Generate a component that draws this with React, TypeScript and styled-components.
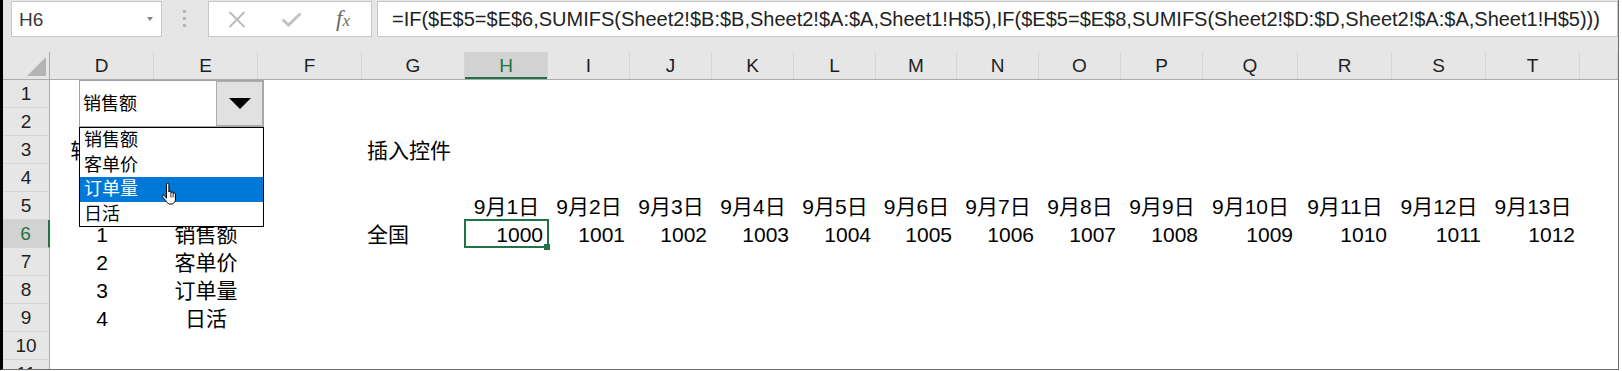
import React from "react";
import styled, { createGlobalStyle, css } from "styled-components";

const FONT = `"Liberation Sans", "Noto Sans CJK SC", sans-serif`;

const GlobalStyle = createGlobalStyle`
  html, body { margin: 0; padding: 0; background: #ffffff; }
  body { font-family: ${FONT}; }
  * { box-sizing: border-box; }
`;

const COLS = [47, 104, 104, 104, 103, 83, 82, 82, 82, 82, 81, 82, 82, 82, 95, 94, 94, 94];
const GRID = COLS.map((w) => `${w}px`).join(" ") + " 1fr";
const LETTERS = ["D", "E", "F", "G", "H", "I", "J", "K", "L", "M", "N", "O", "P", "Q", "R", "S", "T", ""];

const Window = styled.div`
  width: 1622px;
  height: 371px;
  background: #ffffff;
  overflow: hidden;
`;

const Frame = styled.div`
  width: 1619px;
  height: 370px;
  background: #e6e6e6;
  border-left: 3px solid #000000;
  border-right: 1px solid #6f6f6f;
  border-bottom: 1px solid #6f6f6f;
  display: flex;
  flex-direction: column;
  overflow: hidden;
`;

const FormulaBar = styled.div`
  height: 52px;
  flex: none;
  display: flex;
  align-items: flex-start;
  padding-top: 1px;
`;

const NameBox = styled.div`
  margin-left: 8px;
  width: 151px;
  height: 36px;
  background: #ffffff;
  border: 1px solid #c6c6c6;
  display: flex;
  align-items: center;
  justify-content: space-between;
  padding: 0 8px 0 7px;
  font-size: 19px;
  color: #3a3a3a;
  line-height: 1;
`;

const SmallCaret = styled.span`
  width: 0;
  height: 0;
  border-left: 3.5px solid transparent;
  border-right: 3.5px solid transparent;
  border-top: 4px solid #808080;
`;

const Grip = styled.div`
  margin-left: 21px;
  margin-top: 9px;
  display: flex;
  flex-direction: column;
  gap: 4px;
`;

const GripDot = styled.span`
  width: 3px;
  height: 3px;
  background: #b4b4b4;
`;

const FxBox = styled.div`
  margin-left: 22px;
  width: 164px;
  height: 36px;
  background: #ffffff;
  border: 1px solid #c6c6c6;
  display: grid;
  grid-template-columns: 55px 54px 50px;
  align-items: center;
  justify-items: center;
`;

const FxLabel = styled.span`
  font-family: "Liberation Serif", serif;
  font-style: italic;
  color: #6a6a6a;
  font-size: 23px;
  line-height: 1;
  margin-top: -2px;
  & > small {
    font-size: 17px;
  }
`;

const FormulaInput = styled.div`
  margin-left: 5px;
  flex: 1;
  height: 36px;
  background: #ffffff;
  border: 1px solid #c6c6c6;
  display: flex;
  align-items: center;
  padding-left: 14px;
  font-size: 20px;
  color: #222222;
  white-space: nowrap;
  overflow: hidden;
  line-height: 1;
`;

const HeaderRow = styled.div`
  height: 28px;
  flex: none;
  display: grid;
  grid-template-columns: ${GRID};
  border-bottom: 1px solid #ababab;
`;

const Corner = styled.div`
  border-right: 1px solid #ababab;
  display: flex;
  align-items: flex-end;
  justify-content: flex-end;
  padding: 0 3px 3px 0;
`;

const ColHeader = styled.div<{ $active?: boolean }>`
  border-right: 1px solid #d5d5d5;
  display: flex;
  align-items: center;
  justify-content: center;
  font-size: 19px;
  color: #1f1f1f;
  line-height: 1;
  ${(p) =>
    p.$active &&
    css`
      background: #d2d2d2;
      color: #217346;
      box-shadow: inset 0 -2px 0 #217346;
    `}
`;

const Body = styled.div`
  position: relative;
  flex: 1;
  display: grid;
  grid-template-columns: ${GRID};
  grid-auto-rows: 28px;
  background: #ffffff;
  overflow: hidden;
`;

const RowHeader = styled.div<{ $active?: boolean }>`
  background: #e6e6e6;
  border-right: 1px solid #ababab;
  border-bottom: 1px solid #d5d5d5;
  display: flex;
  align-items: center;
  justify-content: center;
  font-size: 19px;
  color: #1f1f1f;
  line-height: 1;
  ${(p) =>
    p.$active &&
    css`
      background: #d2d2d2;
      color: #217346;
      border-right: 2px solid #217346;
    `}
`;

const Cell = styled.div<{ $align?: "left" | "center" | "right"; $selected?: boolean }>`
  position: relative;
  display: flex;
  align-items: center;
  justify-content: ${(p) =>
    p.$align === "right" ? "flex-end" : p.$align === "center" ? "center" : "flex-start"};
  padding: 0 5px;
  font-size: 21px;
  line-height: 1;
  color: #000000;
  white-space: nowrap;
  ${(p) =>
    p.$selected &&
    css`
      &::after {
        content: "";
        position: absolute;
        left: -1px;
        top: -1px;
        right: -1px;
        bottom: 0;
        border: 2px solid #217346;
      }
      &::before {
        content: "";
        position: absolute;
        right: -2px;
        bottom: -2px;
        width: 6px;
        height: 6px;
        background: #217346;
        z-index: 1;
      }
    `}
`;

const Combo = styled.div`
  position: absolute;
  left: 76px;
  top: 0;
  width: 185px;
  height: 47px;
  background: #ffffff;
  border: 1px solid #a6a6a6;
  display: flex;
  z-index: 3;
`;

const ComboText = styled.div`
  flex: 1;
  display: flex;
  align-items: center;
  padding-left: 3px;
  font-size: 18px;
  color: #000000;
  line-height: 1;
`;

const ComboButton = styled.div`
  width: 47px;
  background: #e1e1e1;
  border: 1px solid #adadad;
  display: flex;
  align-items: center;
  justify-content: center;
`;

const ComboArrow = styled.span`
  width: 0;
  height: 0;
  border-left: 11px solid transparent;
  border-right: 11px solid transparent;
  border-top: 11px solid #000000;
`;

const List = styled.div`
  position: absolute;
  left: 76px;
  top: 47px;
  width: 185px;
  background: #ffffff;
  border: 1px solid #000000;
  display: flex;
  flex-direction: column;
  z-index: 3;
`;

const ListItem = styled.div<{ $active?: boolean }>`
  position: relative;
  height: 24.5px;
  display: flex;
  align-items: center;
  padding-left: 4px;
  font-size: 18px;
  line-height: 1;
  color: ${(p) => (p.$active ? "#ffffff" : "#000000")};
  background: ${(p) => (p.$active ? "#0078d7" : "transparent")};
`;

const Pointer = styled.svg`
  position: absolute;
  left: 81px;
  top: 6px;
  z-index: 4;
`;

type CellDef = { text: string; align: "left" | "center" | "right" };

const dates = Array.from({ length: 13 }, (_, i) => `9月${i + 1}日`);
const values = Array.from({ length: 13 }, (_, i) => String(1000 + i));
const labels = ["销售额", "客单价", "订单量", "日活"];

function buildRows(): Record<number, Record<number, CellDef>> {
  const rows: Record<number, Record<number, CellDef>> = {};
  for (let r = 1; r <= 11; r++) rows[r] = {};
  rows[3][1] = { text: "辅助列", align: "center" };
  rows[3][4] = { text: "插入控件", align: "left" };
  dates.forEach((d, i) => (rows[5][5 + i] = { text: d, align: "center" }));
  rows[6][4] = { text: "全国", align: "left" };
  values.forEach((v, i) => (rows[6][5 + i] = { text: v, align: "right" }));
  labels.forEach((l, i) => {
    rows[6 + i][1] = { text: String(i + 1), align: "center" };
    rows[6 + i][2] = { text: l, align: "center" };
  });
  return rows;
}

const ROWS = buildRows();

export default function App() {
  return (
    <Window>
      <GlobalStyle />
      <Frame>
        <FormulaBar>
          <NameBox>
            <span>H6</span>
            <SmallCaret />
          </NameBox>
          <Grip>
            <GripDot />
            <GripDot />
            <GripDot />
          </Grip>
          <FxBox>
            <svg width="18" height="17" viewBox="0 0 18 17">
              <path d="M1.5 1 L16.5 16 M16.5 1 L1.5 16" stroke="#b9b9b9" strokeWidth="1.8" fill="none" />
            </svg>
            <svg width="21" height="15" viewBox="0 0 21 15">
              <path d="M1.5 7.5 L7.5 13 L19.5 1.5" stroke="#c2c2c2" strokeWidth="3" fill="none" />
            </svg>
            <FxLabel>
              f<small>x</small>
            </FxLabel>
          </FxBox>
          <FormulaInput>
            =IF($E$5=$E$6,SUMIFS(Sheet2!$B:$B,Sheet2!$A:$A,Sheet1!H$5),IF($E$5=$E$8,SUMIFS(Sheet2!$D:$D,Sheet2!$A:$A,Sheet1!H$5)))
          </FormulaInput>
        </FormulaBar>
        <HeaderRow>
          <Corner>
            <svg width="19" height="19" viewBox="0 0 19 19">
              <polygon points="19,0 19,19 0,19" fill="#b4b4b4" />
            </svg>
          </Corner>
          {LETTERS.map((l, i) => (
            <ColHeader key={i} $active={l === "H"}>
              {l}
            </ColHeader>
          ))}
        </HeaderRow>
        <Body>
          {Array.from({ length: 11 }, (_, ri) => {
            const r = ri + 1;
            return (
              <React.Fragment key={r}>
                <RowHeader $active={r === 6}>{r}</RowHeader>
                {LETTERS.map((_, ci) => {
                  const c = ROWS[r][ci + 1];
                  return (
                    <Cell key={ci} $align={c?.align} $selected={r === 6 && ci + 1 === 5}>
                      {c?.text}
                    </Cell>
                  );
                })}
              </React.Fragment>
            );
          })}
          <Combo>
            <ComboText>销售额</ComboText>
            <ComboButton>
              <ComboArrow />
            </ComboButton>
          </Combo>
          <List>
            {labels.map((l, i) => (
              <ListItem key={l} $active={i === 2}>
                {l}
                {i === 2 && (
                  <Pointer width="17" height="22" viewBox="0 0 17 22">
                    <path
                      d="M5.5 1.6c0-.8.5-1.3 1.2-1.3s1.2.5 1.2 1.3V9c0-.6.5-1 1.1-1s1.1.4 1.1 1v1c0-.6.5-1 1.1-1s1.1.4 1.1 1v1c0-.6.5-1 1.1-1s1.1.4 1.1 1v5c0 2.4-1.4 4.3-3.3 5H8.2c-1.4-.6-2.6-1.9-3.5-3.4L1.6 14c-.4-.6-.2-1.3.3-1.6.5-.3 1.2-.2 1.6.3l2 2.5Z"
                      fill="#ffffff"
                      stroke="#000000"
                      strokeWidth="1"
                    />
                    <path d="M9.9 10v4.5 M12.1 11v3.5 M14.3 12v2.5" stroke="#000" strokeWidth="0.8" />
                  </Pointer>
                )}
              </ListItem>
            ))}
          </List>
        </Body>
      </Frame>
    </Window>
  );
}
